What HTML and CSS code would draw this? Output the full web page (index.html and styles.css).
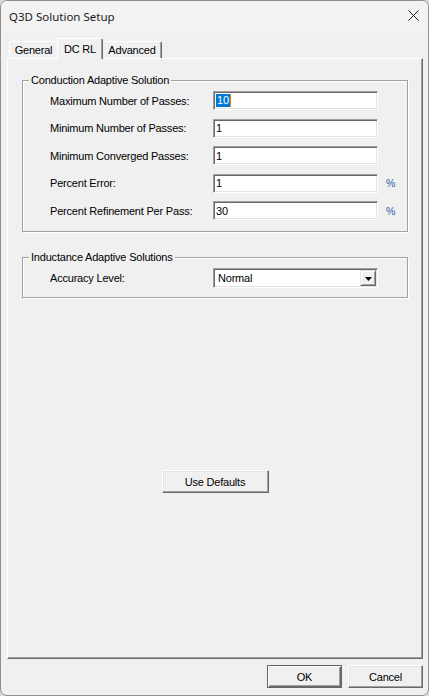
FILE: index.html
```html
<!DOCTYPE html>
<html>
<head>
<meta charset="utf-8">
<title>Q3D Solution Setup</title>
<link rel="stylesheet" href="styles.css">
</head>
<body>
<div class="window">
  <div class="titlebar">
    <span class="title">Q3D Solution Setup</span>
    <span class="close"><svg width="11" height="11" viewBox="0 0 11 11"><path d="M0.5 0.5L10.5 10.5M10.5 0.5L0.5 10.5" stroke="#1b1b1b" stroke-width="1" fill="none"/></svg></span>
  </div>
  <div class="content">
    <div class="tabstrip">
      <div class="tab tab-general">General</div>
      <div class="tab tab-active">DC RL</div>
      <div class="tab tab-advanced">Advanced</div>
    </div>
    <div class="panel">
      <fieldset class="group group-conduction">
        <legend>Conduction Adaptive Solution</legend>
        <div class="row"><span class="label">Maximum Number of Passes:</span><div class="field"><span class="sel">10</span></div></div>
        <div class="row"><span class="label">Minimum Number of Passes:</span><div class="field">1</div></div>
        <div class="row"><span class="label">Minimum Converged Passes:</span><div class="field">1</div></div>
        <div class="row"><span class="label">Percent Error:</span><div class="field">1</div><span class="unit">%</span></div>
        <div class="row"><span class="label">Percent Refinement Per Pass:</span><div class="field">30</div><span class="unit">%</span></div>
      </fieldset>
      <fieldset class="group group-inductance">
        <legend>Inductance Adaptive Solutions</legend>
        <div class="row"><span class="label">Accuracy Level:</span><div class="field combo"><span class="combo-text">Normal</span><span class="drop"><svg width="7" height="4" viewBox="0 0 7 4"><path d="M0 0H7L3.5 4Z" fill="#000"/></svg></span></div></div>
      </fieldset>
      <div class="defaults-wrap"><button class="btn btn-defaults">Use Defaults</button></div>
    </div>
    <div class="footer">
      <button class="btn btn-ok">OK</button>
      <button class="btn">Cancel</button>
    </div>
  </div>
</div>
</body>
</html>
```

FILE: styles.css
```css
html, body {
  margin: 0;
  padding: 0;
  background: #d8d8d8;
}

.window {
  width: 429px;
  height: 696px;
  box-sizing: border-box;
  border: 1px solid #8f8f8f;
  border-radius: 7px;
  background: #f0f0f0;
  overflow: hidden;
  font-family: "Liberation Sans", Arial, sans-serif;
  font-size: 11px;
  letter-spacing: -0.2px;
  color: #000;
}

.titlebar {
  height: 30px;
  background: #f3f3f3;
  display: flex;
  align-items: center;
  justify-content: space-between;
  padding: 0 9px 0 8px;
}

.title {
  font-family: "Noto Sans", "Open Sans", sans-serif;
  font-size: 11.5px;
  letter-spacing: 0;
  color: #1a1a1a;
  padding-top: 1px;
}

.close {
  display: flex;
  align-self: flex-start;
  margin-top: 9px;
}

.content {
  padding: 0 5px 0 6px;
}

.tabstrip {
  margin-top: 7px;
  margin-left: 2px;
  height: 21px;
  display: flex;
  align-items: flex-end;
}

.tab {
  box-sizing: border-box;
  height: 17px;
  margin-bottom: 1px;
  display: flex;
  align-items: center;
  justify-content: center;
  border-top: 1px solid #fff;
  border-left: 1px solid #fff;
  border-right: 1px solid #696969;
  border-radius: 2px 2px 0 0;
  box-shadow: inset -1px 0 0 #a0a0a0;
  background: #f0f0f0;
}

.tab-general {
  width: 48px;
  border-right: none;
  box-shadow: none;
}

.tab-active {
  width: 46px;
  height: 21px;
  margin-bottom: 0;
  padding-bottom: 1px;
  position: relative;
  z-index: 1;
}

.tab-advanced {
  width: 59px;
  border-left: none;
}

.panel {
  box-sizing: border-box;
  height: 601px;
  margin-top: -1px;
  border: 1px solid;
  border-color: #fff #696969 #696969 #fff;
  box-shadow: inset -1px -1px 0 #a0a0a0;
  padding: 0 14px;
}

.group {
  margin: 0;
  padding: 4px 0 11px 0;
  border: 1px solid #a0a0a0;
  box-shadow: 1px 1px 0 #fff, inset 1px 1px 0 #fff;
  min-width: 0;
}

.group-conduction {
  margin-top: 14px;
}

.group-inductance {
  margin-top: 18px;
  padding-bottom: 9px;
}

.group legend {
  margin-left: 6px;
  padding: 0 2px;
  line-height: 14px;
  background: #f0f0f0;
}

.row {
  display: flex;
  align-items: center;
  padding-left: 27px;
  margin-top: 8.5px;
}

.row:first-of-type {
  margin-top: 0;
}

.label {
  width: 163px;
  flex: none;
}

.field {
  box-sizing: border-box;
  width: 165px;
  height: 19px;
  flex: none;
  border: 1px solid;
  border-color: #a0a0a0 #fff #fff #a0a0a0;
  box-shadow: inset 1px 1px 0 #696969, inset -1px -1px 0 #e3e3e3;
  background: #fff;
  display: flex;
  align-items: center;
  padding-left: 2px;
}

.sel {
  display: inline-block;
  line-height: 13px;
  background: #0078d7;
  color: #fff;
  padding: 0 1px 0 1px;
  border-right: 1px solid #f08a00;
}

.unit {
  margin-left: 8px;
  font-size: 10.5px;
  color: #2f5cab;
}

.combo {
  height: 20px;
  padding: 1px 1px 1px 4px;
}

.combo-text {
  flex: 1;
}

.drop {
  box-sizing: border-box;
  width: 16px;
  height: 16px;
  display: flex;
  align-items: center;
  justify-content: center;
  border: 1px solid;
  border-color: #e3e3e3 #696969 #696969 #e3e3e3;
  box-shadow: inset 1px 1px 0 #fff, inset -1px -1px 0 #a0a0a0;
  background: #f0f0f0;
  padding-top: 1px;
}

.defaults-wrap {
  display: flex;
  justify-content: center;
  margin-top: 172px;
}

.btn {
  box-sizing: border-box;
  height: 23px;
  margin: 0;
  padding: 0;
  font-family: "Liberation Sans", Arial, sans-serif;
  font-size: 11px;
  letter-spacing: -0.2px;
  color: #000;
  background: #f0f0f0;
  border: 1px solid;
  border-color: #fff #696969 #696969 #fff;
  box-shadow: inset -1px -1px 0 #a0a0a0, inset 1px 1px 0 #e3e3e3;
  width: 75px;
}

.btn-defaults {
  width: 107px;
}

.btn-ok {
  border-color: #646464;
  box-shadow: inset 1px 1px 0 #fff, inset -1px -1px 0 #696969, inset -2px -2px 0 #a0a0a0;
}

.footer {
  display: flex;
  justify-content: flex-end;
  gap: 6px;
  margin-top: 6px;
}
```
